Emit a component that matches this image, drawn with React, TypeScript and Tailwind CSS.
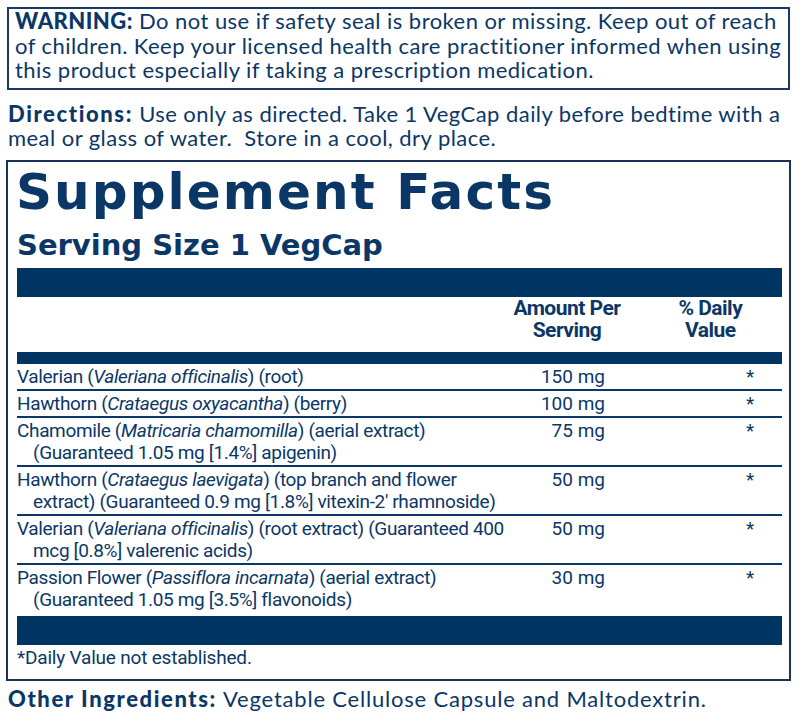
import React from "react";

const label = "font-['Lato','Open_Sans',sans-serif] text-[22px] tracking-[0.45px]";
const heavy = "font-['DejaVu_Sans','Liberation_Sans',sans-serif] font-bold";
const cond = "font-['Roboto','Liberation_Sans',sans-serif]";

type Item = { name: React.ReactNode; amount: string; last?: boolean };

const items: Item[] = [
  {
    name: (
      <>
        Valerian (<i>Valeriana officinalis</i>) (root)
      </>
    ),
    amount: "150 mg",
  },
  {
    name: (
      <>
        Hawthorn (<i>Crataegus oxyacantha</i>) (berry)
      </>
    ),
    amount: "100 mg",
  },
  {
    name: (
      <>
        Chamomile (<i>Matricaria chamomilla</i>) (aerial extract)
        <br />
        (Guaranteed 1.05 mg [1.4%] apigenin)
      </>
    ),
    amount: "75 mg",
  },
  {
    name: (
      <>
        Hawthorn (<i>Crataegus laevigata</i>) (top branch and flower
        <br />
        extract) (Guaranteed 0.9 mg [1.8%] vitexin-2' rhamnoside)
      </>
    ),
    amount: "50 mg",
  },
  {
    name: (
      <>
        Valerian (<i>Valeriana officinalis</i>) (root extract) (Guaranteed 400
        <br />
        mcg [0.8%] valerenic acids)
      </>
    ),
    amount: "50 mg",
  },
  {
    name: (
      <>
        Passion Flower (<i>Passiflora incarnata</i>) (aerial extract)
        <br />
        (Guaranteed 1.05 mg [3.5%] flavonoids)
      </>
    ),
    amount: "30 mg",
    last: true,
  },
];

function Row({ item }: { item: Item }) {
  return (
    <div
      className={
        "flex pt-[2px] text-[19px] leading-[22px] " +
        (item.last ? "pb-[5px]" : "pb-[1px] border-b-2 border-[#0b3767]")
      }
    >
      <div className="w-[480px] pl-[16px] -indent-[16px] whitespace-nowrap tracking-[-0.35px]">{item.name}</div>
      <div className="w-[108px] text-right">{item.amount}</div>
      <div className="flex-1 pl-[141px]">*</div>
    </div>
  );
}

export default function App() {
  return (
    <div className="w-[797px] h-[720px] bg-white text-[#0b3767] overflow-hidden">
      {/* Warning */}
      <div className="ml-[7px] mt-[7px] w-[783px] h-[83px] border-2 border-[#1b3a63] px-[6px]">
        <p className={label + " leading-[24.5px] whitespace-nowrap"}>
          <b className="font-black">WARNING:</b> Do not use if safety seal is broken or missing. Keep out of reach
          <br />
          of children. Keep your licensed health care practitioner informed when using
          <br />
          this product especially if taking a prescription medication.
        </p>
      </div>

      {/* Directions */}
      <p className={label + " px-[8px] pt-[12px] leading-[24px] whitespace-nowrap"}>
        <b className="font-black tracking-[1.6px]">Directions:</b> Use only as directed. Take 1 VegCap daily before
        bedtime with a
        <br />
        meal or glass of water.&nbsp; Store in a cool, dry place.
      </p>

      {/* Supplement Facts */}
      <div className="ml-[6px] mt-[10px] w-[785px] h-[521px] border-2 border-[#1b3358] pl-[9px] pr-[7px]">
        <h1 className={heavy + " text-[50px] leading-[54px] tracking-[2.1px] pt-[3px] -ml-[1px] whitespace-nowrap"}>
          Supplement Facts
        </h1>
        <h2 className={heavy + " text-[29px] leading-[34px] mt-[9px]"}>Serving Size 1 VegCap</h2>
        <div className="h-[29px] bg-[#003463] mt-[6px]" />

        <div className={cond + " flex font-bold text-[21px] leading-[22px] h-[55px] tracking-[-0.5px]"}>
          <div className="w-[487px]" />
          <div className="w-[146px] text-center">
            Amount Per
            <br />
            Serving
          </div>
          <div className="w-[146px] text-center">
            % Daily
            <br />
            Value
          </div>
        </div>
        <div className="h-[12px] bg-[#003463]" />

        <div className={cond}>
          {items.map((item, i) => (
            <Row key={i} item={item} />
          ))}
        </div>

        <div className="h-[29px] bg-[#003463]" />
        <p className={cond + " text-[19px] leading-[22px] pt-[2px] tracking-[-0.2px]"}>*Daily Value not established.</p>
      </div>

      {/* Other ingredients */}
      <p className={label + " px-[8px] pt-[6px] leading-[24px] whitespace-nowrap"}>
        <b className="font-black tracking-[1.6px]">Other Ingredients:</b>{" "}
        <span className="tracking-[0.8px]">Vegetable Cellulose Capsule and Maltodextrin.</span>
      </p>
    </div>
  );
}
